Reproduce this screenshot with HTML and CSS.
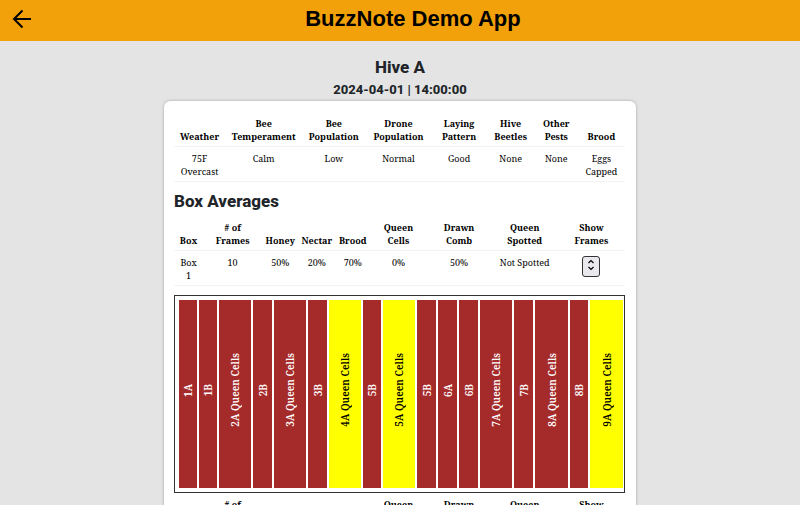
FILE: index.html
```html
<!DOCTYPE html>
<html lang="en">
<head>
<meta charset="utf-8">
<title>BuzzNote Demo App</title>
<link rel="stylesheet" href="styles.css">
</head>
<body>
<header class="topbar">
  <button class="back" type="button" aria-label="Back">
    <svg width="20" height="20" viewBox="0 0 20 20" fill="none" stroke="currentColor" stroke-width="2"><path d="M10.500 1.500 2 10l8.500 8.500M2 10h17"/></svg>
  </button>
  <h1 class="app-title">BuzzNote Demo App</h1>
</header>
<main class="page">
  <h2 class="hive-name">Hive A</h2>
  <h3 class="visit-date">2024-04-01 | 14:00:00</h3>
  <section class="card">
    <table class="data">
      <colgroup><col class="w51"><col class="w77"><col class="w63"><col class="w66"><col class="w55"><col class="w48"><col class="w43"><col class="w47"></colgroup>
      <thead><tr><th>Weather</th><th>Bee<br>Temperament</th><th>Bee<br>Population</th><th>Drone<br>Population</th><th>Laying<br>Pattern</th><th>Hive<br>Beetles</th><th>Other<br>Pests</th><th>Brood</th></tr></thead>
      <tbody><tr><td>75F<br>Overcast</td><td>Calm</td><td>Low</td><td>Normal</td><td>Good</td><td>None</td><td>None</td><td>Eggs<br>Capped</td></tr></tbody>
    </table>
    <h2 class="section-title">Box Averages</h2>
    <table class="data">
      <colgroup><col class="w29"><col class="w59"><col class="w36"><col class="w37"><col class="w35"><col class="w56"><col class="w65"><col class="w66"><col class="w67"></colgroup>
      <thead><tr><th>Box</th><th># of<br>Frames</th><th>Honey</th><th>Nectar</th><th>Brood</th><th>Queen<br>Cells</th><th>Drawn<br>Comb</th><th>Queen<br>Spotted</th><th>Show<br>Frames</th></tr></thead>
      <tbody><tr><td>Box<br>1</td><td>10</td><td>50%</td><td>20%</td><td>70%</td><td>0%</td><td>50%</td><td>Not Spotted</td><td><button class="toggle" type="button" aria-label="Show frames"><svg width="8" height="12" viewBox="0 0 8 12" fill="none" stroke="currentColor" stroke-width="1.200"><path d="M1.500 4 4 1.500 6.500 4M1.500 8 4 10.500 6.500 8"/></svg></button></td></tr></tbody>
    </table>
    <div class="frames">
      <div class="frame"><span>1A</span></div>
      <div class="frame"><span>1B</span></div>
      <div class="frame"><span>2A Queen Cells</span></div>
      <div class="frame"><span>2B</span></div>
      <div class="frame"><span>3A Queen Cells</span></div>
      <div class="frame"><span>3B</span></div>
      <div class="frame honey"><span>4A Queen Cells</span></div>
      <div class="frame"><span>5B</span></div>
      <div class="frame honey"><span>5A Queen Cells</span></div>
      <div class="frame"><span>5B</span></div>
      <div class="frame"><span>6A</span></div>
      <div class="frame"><span>6B</span></div>
      <div class="frame"><span>7A Queen Cells</span></div>
      <div class="frame"><span>7B</span></div>
      <div class="frame"><span>8A Queen Cells</span></div>
      <div class="frame"><span>8B</span></div>
      <div class="frame honey"><span>9A Queen Cells</span></div>
    </div>
    <table class="data">
      <colgroup><col class="w29"><col class="w59"><col class="w36"><col class="w37"><col class="w35"><col class="w56"><col class="w65"><col class="w66"><col class="w67"></colgroup>
      <thead><tr><th>Box</th><th># of<br>Frames</th><th>Honey</th><th>Nectar</th><th>Brood</th><th>Queen<br>Cells</th><th>Drawn<br>Comb</th><th>Queen<br>Spotted</th><th>Show<br>Frames</th></tr></thead>
    </table>
  </section>
</main>
</body>
</html>
```
FILE: styles.css
```css
* { box-sizing: border-box; }
html { scrollbar-width: none; }
body {
  margin: 0;
  background: #e4e4e4;
  color: #212529;
  font-family: Roboto, "Liberation Sans", sans-serif;
}
h1, h2, h3 { margin: 0; font-weight: 800; }
.topbar {
  display: grid;
  grid-template-columns: 44px 1fr 18px;
  align-items: center;
  height: 41px;
  padding-bottom: 3px;
  background: #f2a10a;
  color: #000;
}
.back {
  display: flex;
  justify-content: center;
  padding: 0;
  border: 0;
  background: none;
  color: inherit;
}
.app-title {
  font: 700 22px/26px "Liberation Sans", Arial, sans-serif;
  text-align: center;
}
.page { padding: 14px 12px 0; text-align: center; }
.hive-name { font-size: 17px; line-height: 24px; }
.visit-date { font-size: 13px; line-height: 22px; }
.card {
  max-width: 472px;
  margin: 0 auto;
  padding: 11px 11px 11px 10px;
  border-radius: 6px;
  background: #fff;
  box-shadow: 0 0 3px rgba(0, 0, 0, .3);
}
.data {
  width: 100%;
  table-layout: fixed;
  border-collapse: collapse;
  color: #000;
  font: 9px/13px "Roboto Slab", "Noto Serif", "DejaVu Serif", serif;
}
.data th, .data td {
  padding: 5px 0 3px;
  border-bottom: 1px solid #f3f3f3;
  vertical-align: top;
  white-space: nowrap;
}
.data th { vertical-align: bottom; font-weight: 700; }
.w29 { width: 29px; }
.w35 { width: 35px; }
.w36 { width: 36px; }
.w37 { width: 37px; }
.w43 { width: 43px; }
.w47 { width: 47px; }
.w48 { width: 48px; }
.w51 { width: 51px; }
.w55 { width: 55px; }
.w56 { width: 56px; }
.w59 { width: 59px; }
.w63 { width: 63px; }
.w65 { width: 65px; }
.w66 { width: 66px; }
.w67 { width: 67px; }
.w77 { width: 77px; }
.section-title {
  padding: 7px 0 3px;
  font-size: 17px;
  line-height: 24px;
  text-align: left;
}
.toggle {
  display: flex;
  align-items: center;
  justify-content: center;
  width: 18px;
  height: 21px;
  margin: 0 auto;
  padding: 0 0 3px;
  border: 1px solid #333;
  border-radius: 3px;
  background: #e9e9ed;
  color: #000;
}
.frames {
  display: grid;
  grid-template-columns: 18fr 18fr 32fr 19fr 32fr 19fr 32fr 18fr 32fr 19fr 19fr 19fr 32fr 19fr 33fr 18fr 33fr;
  gap: 2px;
  height: 198px;
  margin-top: 9px;
  padding: 4px 1px 4px 4px;
  border: 1px solid #333;
}
.frame {
  display: flex;
  align-items: center;
  justify-content: center;
  min-width: 0;
  padding-bottom: 8px;
  background: #a52a2a;
  color: #fff;
  font: 600 10px/14px "Roboto Slab", "Noto Serif", "DejaVu Serif", serif;
  white-space: nowrap;
}
.frame span { writing-mode: vertical-rl; transform: rotate(180deg); }
.honey { background: #ff0; color: #000; }
```
